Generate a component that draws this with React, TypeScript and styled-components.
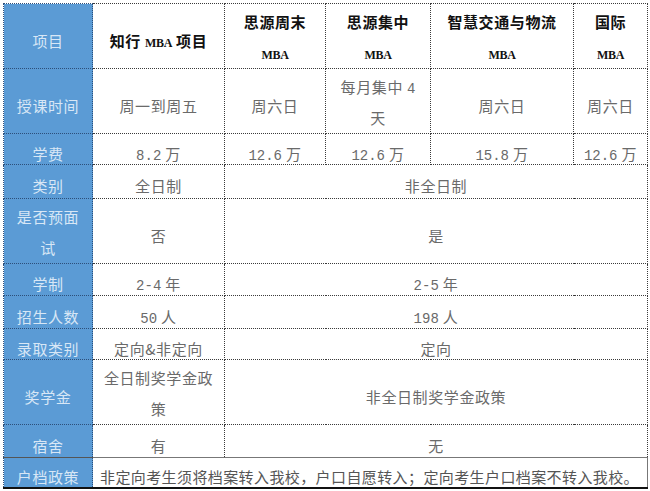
import styled, { createGlobalStyle, css } from 'styled-components'

const GlobalStyle = createGlobalStyle`
  body {
    margin: 0;
    background: #fff;
  }
`

const Page = styled.div`
  padding: 3px 0 0 3px;
`

const Table = styled.table`
  border-collapse: collapse;
  table-layout: fixed;
  width: 644px;
  font-family: 'Noto Sans CJK SC', sans-serif;
  font-size: 15px;
  letter-spacing: 0.6px;
`

const Row = styled.tr<{ $h: number }>`
  height: ${p => p.$h}px;
`

const cellBase = css<{ $tall?: boolean }>`
  border: 1px dotted #3a3a3a;
  padding: ${p => (p.$tall ? '2px 7px 0' : '9px 7px 0')};
  text-align: center;
  vertical-align: middle;
  line-height: ${p => (p.$tall ? 31 : 20)}px;
`

const Label = styled.td<{ $tall?: boolean; $last?: boolean }>`
  ${cellBase};
  background: #5b9bd5;
  color: #d8e7f6;
  border-color: #2d4f7a;
  ${p =>
    p.$last &&
    css`
      border-top: 1px solid #555;
      border-bottom: 2px solid #111;
    `}
`

const Head = styled.th<{ $tall?: boolean }>`
  ${cellBase};
  color: #111;
  font-weight: 700;
`

const Mba = styled.span`
  font-family: 'Liberation Serif', serif;
  font-size: 12px;
  font-weight: 700;
  letter-spacing: -0.3px;
  line-height: 1;
`

const Num = styled.span`
  font-family: 'Liberation Mono', monospace;
  font-size: 14px;
  letter-spacing: 0;
  line-height: 1;
`

const Cell = styled.td<{ $tall?: boolean }>`
  ${cellBase};
  color: #6a6a6a;
`

const Policy = styled.td`
  ${cellBase};
  text-align: left;
  white-space: nowrap;
  color: #555;
  letter-spacing: 0.4px;
  border-top: 1px solid #777;
  border-right: 1px solid #777;
  border-bottom: 2px solid #111;
`

const widths = [89, 132, 101, 105, 143, 74]

export default function App() {
  return (
    <>
      <GlobalStyle />
      <Page>
        <Table>
          <colgroup>
            {widths.map((w, i) => (
              <col key={i} style={{ width: w }} />
            ))}
          </colgroup>
          <tbody>
            <Row $h={65}>
              <Label>项目</Label>
              <Head>
                知行 <Mba>MBA</Mba> 项目
              </Head>
              <Head $tall>
                思源周末
                <br />
                <Mba>MBA</Mba>
              </Head>
              <Head $tall>
                思源集中
                <br />
                <Mba>MBA</Mba>
              </Head>
              <Head $tall>
                智慧交通与物流
                <br />
                <Mba>MBA</Mba>
              </Head>
              <Head $tall>
                国际
                <br />
                <Mba>MBA</Mba>
              </Head>
            </Row>
            <Row $h={64}>
              <Label>授课时间</Label>
              <Cell>周一到周五</Cell>
              <Cell>周六日</Cell>
              <Cell $tall>
                每月集中 <Num>4</Num> 天
              </Cell>
              <Cell>周六日</Cell>
              <Cell>周六日</Cell>
            </Row>
            <Row $h={31}>
              <Label>学费</Label>
              <Cell>
                <Num>8.2</Num> 万
              </Cell>
              <Cell>
                <Num>12.6</Num> 万
              </Cell>
              <Cell>
                <Num>12.6</Num> 万
              </Cell>
              <Cell>
                <Num>15.8</Num> 万
              </Cell>
              <Cell>
                <Num>12.6</Num> 万
              </Cell>
            </Row>
            <Row $h={34}>
              <Label>类别</Label>
              <Cell>全日制</Cell>
              <Cell colSpan={4}>非全日制</Cell>
            </Row>
            <Row $h={64}>
              <Label $tall>是否预面试</Label>
              <Cell>否</Cell>
              <Cell colSpan={4}>是</Cell>
            </Row>
            <Row $h={32}>
              <Label>学制</Label>
              <Cell>
                <Num>2-4</Num> 年
              </Cell>
              <Cell colSpan={4}>
                <Num>2-5</Num> 年
              </Cell>
            </Row>
            <Row $h={33}>
              <Label>招生人数</Label>
              <Cell>
                <Num>50</Num> 人
              </Cell>
              <Cell colSpan={4}>
                <Num>198</Num> 人
              </Cell>
            </Row>
            <Row $h={31}>
              <Label>录取类别</Label>
              <Cell>定向&amp;非定向</Cell>
              <Cell colSpan={4}>定向</Cell>
            </Row>
            <Row $h={65}>
              <Label>奖学金</Label>
              <Cell $tall>全日制奖学金政策</Cell>
              <Cell colSpan={4}>非全日制奖学金政策</Cell>
            </Row>
            <Row $h={33}>
              <Label>宿舍</Label>
              <Cell>有</Cell>
              <Cell colSpan={4}>无</Cell>
            </Row>
            <Row $h={29}>
              <Label $last>户档政策</Label>
              <Policy colSpan={5}>
                非定向考生须将档案转入我校，户口自愿转入；定向考生户口档案不转入我校。
              </Policy>
            </Row>
          </tbody>
        </Table>
      </Page>
    </>
  )
}
